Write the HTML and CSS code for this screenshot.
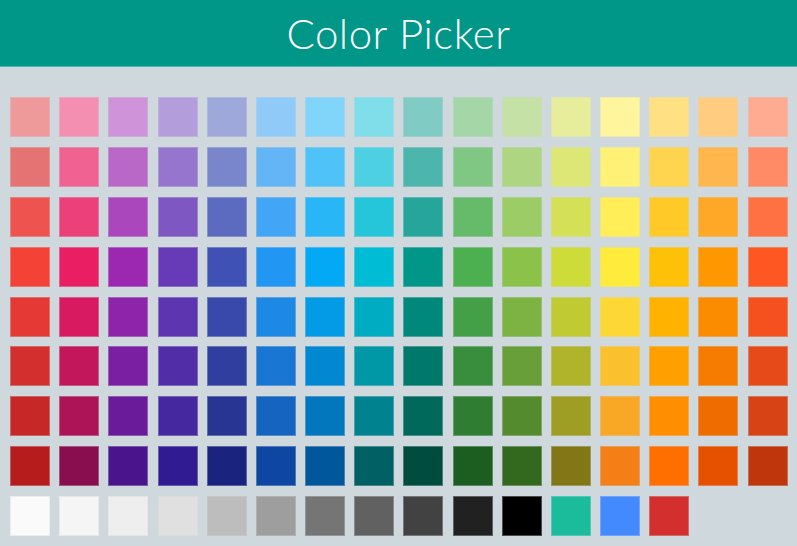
FILE: index.html
```html
<!DOCTYPE html>
<html lang="en">
<head>
  <meta charset="UTF-8">
  <title>Color Picker</title>
  <meta name="viewport" content="width=device-width, initial-scale=1">
  <link rel="stylesheet" href="styles.css">
</head>
<body>
<header class="topbar">
  <h1>Color Picker</h1>
</header>
<div class="palette" id="palette"></div>
<script>
  // material shades 200 -> 900, one row per shade
  const rows = [
    ["#EF9A9A","#F48FB1","#CE93D8","#B39DDB","#9FA8DA","#90CAF9","#81D4FA","#80DEEA","#80CBC4","#A5D6A7","#C5E1A5","#E6EE9C","#FFF59D","#FFE082","#FFCC80","#FFAB91"],
    ["#E57373","#F06292","#BA68C8","#9575CD","#7986CB","#64B5F6","#4FC3F7","#4DD0E1","#4DB6AC","#81C784","#AED581","#DCE775","#FFF176","#FFD54F","#FFB74D","#FF8A65"],
    ["#EF5350","#EC407A","#AB47BC","#7E57C2","#5C6BC0","#42A5F5","#29B6F6","#26C6DA","#26A69A","#66BB6A","#9CCC65","#D4E157","#FFEE58","#FFCA28","#FFA726","#FF7043"],
    ["#F44336","#E91E63","#9C27B0","#673AB7","#3F51B5","#2196F3","#03A9F4","#00BCD4","#009688","#4CAF50","#8BC34A","#CDDC39","#FFEB3B","#FFC107","#FF9800","#FF5722"],
    ["#E53935","#D81B60","#8E24AA","#5E35B1","#3949AB","#1E88E5","#039BE5","#00ACC1","#00897B","#43A047","#7CB342","#C0CA33","#FDD835","#FFB300","#FB8C00","#F4511E"],
    ["#D32F2F","#C2185B","#7B1FA2","#512DA8","#303F9F","#1976D2","#0288D1","#0097A7","#00796B","#388E3C","#689F38","#AFB42B","#FBC02D","#FFA000","#F57C00","#E64A19"],
    ["#C62828","#AD1457","#6A1B9A","#4527A0","#283593","#1565C0","#0277BD","#00838F","#00695C","#2E7D32","#558B2F","#9E9D24","#F9A825","#FF8F00","#EF6C00","#D84315"],
    ["#B71C1C","#880E4F","#4A148C","#311B92","#1A237E","#0D47A1","#01579B","#006064","#004D40","#1B5E20","#33691E","#827717","#F57F17","#FF6F00","#E65100","#BF360C"],
    ["#FAFAFA","#F5F5F5","#EEEEEE","#E0E0E0","#BDBDBD","#9E9E9E","#757575","#616161","#424242","#212121","#000000","#1ABC9C","#448AFF","#D32F2F"]
  ];
  const palette = document.getElementById("palette");
  rows.forEach(r => {
    r.forEach(c => {
      const s = document.createElement("div");
      s.className = "swatch";
      s.title = c;
      s.style.background = c;
      palette.appendChild(s);
    });
  });
</script>
</body>
</html>
```

FILE: styles.css
```css
body { margin:0; background:#cfd8dc; font-family:"Lato", "Open Sans", sans-serif; }
.topbar { background:#009688; height:66px; border-bottom:1px solid #4db6ac; display:flex; align-items:center; justify-content:center; }
.topbar h1 { margin:0; color:#fff; font-weight:300; font-size:42px; letter-spacing:0.5px; }
.palette { display:grid; grid-template-columns:repeat(16, 40px); grid-auto-rows:40px; column-gap:9.18px; row-gap:9.88px; padding:30px 0 0 10px; }
.swatch { box-shadow:inset 0 0 0 1px rgba(207,216,220,0.35); cursor:pointer; }
```
